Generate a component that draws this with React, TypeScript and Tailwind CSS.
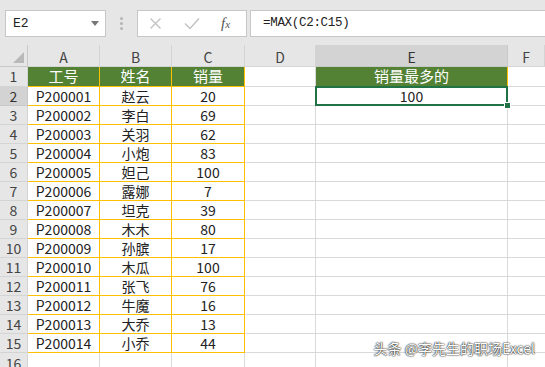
import React from "react";

const rows: [string, string, string][] = [
  ["P200001", "赵云", "20"],
  ["P200002", "李白", "69"],
  ["P200003", "关羽", "62"],
  ["P200004", "小炮", "83"],
  ["P200005", "妲己", "100"],
  ["P200006", "露娜", "7"],
  ["P200007", "坦克", "39"],
  ["P200008", "木木", "80"],
  ["P200009", "孙膑", "17"],
  ["P200010", "木瓜", "100"],
  ["P200011", "张飞", "76"],
  ["P200012", "牛魔", "16"],
  ["P200013", "大乔", "13"],
  ["P200014", "小乔", "44"],
];

const cols = ["A", "B", "C", "D", "E", "F"];

function FormulaBar() {
  return (
    <div className="flex h-[45px] items-start bg-[#e6e6e6] pt-[10px]">
      <div className="ml-[5px] flex h-[27px] w-[101px] items-center justify-between border border-[#c6c6c6] bg-white pl-[7px] pr-[6px]">
        <span className="font-['Liberation_Mono',monospace] text-[13px] text-[#222]">E2</span>
        <span className="h-0 w-0 border-x-[4px] border-t-[5px] border-x-transparent border-t-[#777]" />
      </div>
      <div className="flex h-[27px] w-[31px] flex-col items-center justify-center gap-[2px]">
        <span className="h-[3px] w-[3px] rounded-full bg-[#b5b5b5]" />
        <span className="h-[3px] w-[3px] rounded-full bg-[#b5b5b5]" />
        <span className="h-[3px] w-[3px] rounded-full bg-[#b5b5b5]" />
      </div>
      <div className="flex h-[27px] w-[110px] items-center border border-[#c6c6c6] bg-white">
        <svg width="36" height="27" viewBox="0 0 36 27">
          <path d="M12.5 8.5 L22.5 18.5 M22.5 8.5 L12.5 18.5" stroke="#c2c2c2" strokeWidth="1.4" fill="none" />
        </svg>
        <svg width="36" height="27" viewBox="0 0 36 27">
          <path d="M11 13.5 L16 18.5 L25 8.5" stroke="#c2c2c2" strokeWidth="1.4" fill="none" />
        </svg>
        <span className="ml-[11px] font-['Liberation_Serif',serif] text-[15px] italic text-[#555]">
          f<span className="text-[11px]">x</span>
        </span>
      </div>
      <div className="ml-[3px] flex h-[27px] flex-1 items-center border-y border-l border-[#c6c6c6] bg-white pl-[12px]">
        <span className="font-['Liberation_Mono',monospace] text-[12.5px] tracking-[-0.3px] text-[#222]">=MAX(C2:C15)</span>
      </div>
    </div>
  );
}

export default function App() {
  const txt = "font-['Noto_Sans_CJK_SC',sans-serif]";
  return (
    <div className="relative h-[367px] w-[545px] overflow-hidden bg-white">
      <FormulaBar />
      <div className={`grid grid-cols-[28px_72px_72px_73px_71px_192px_1fr] grid-rows-[22px_20px_repeat(15,19px)] ${txt}`}>
        {/* column header */}
        <div className="flex items-end justify-end border-r border-b border-[#c8c8c8] bg-[#e6e6e6] pr-[3px] pb-[3px]">
          <svg width="11" height="11" viewBox="0 0 11 11">
            <path d="M11 0 L11 11 L0 11 Z" fill="#b9b9b9" />
          </svg>
        </div>
        {cols.map((c) => (
          <div
            key={c}
            className={
              c === "E"
                ? "flex items-center justify-center border-r border-b border-[#c8c8c8] bg-[#d3d3d3] pt-[3px] text-[14px] text-[#333]"
                : "flex items-center justify-center border-r border-b border-[#d4d4d4] bg-[#e6e6e6] pt-[3px] text-[14px] text-[#444]"
            }
          >
            {c}
          </div>
        ))}

        {/* row 1 */}
        <div className="flex items-center justify-center border-r border-b border-[#d4d4d4] bg-[#e6e6e6] text-[14px] text-[#444]">1</div>
        {["工号", "姓名", "销量"].map((h) => (
          <div key={h} className="flex items-center justify-center border-r border-b border-[#ffc000] bg-[#548235] text-[15px] text-white">
            {h}
          </div>
        ))}
        <div className="border-r border-b border-[#d9d9d9]" />
        <div className="flex items-center justify-center border-r border-b border-[#ffc000] bg-[#548235] text-[15px] text-white">销量最多的</div>
        <div className="border-b border-[#d9d9d9]" />

        {rows.map((r, i) => (
          <React.Fragment key={r[0]}>
            <div
              className={
                i === 0
                  ? "flex items-center justify-center border-r border-b border-[#c8c8c8] bg-[#d3d3d3] text-[14px] text-[#333]"
                  : "flex items-center justify-center border-r border-b border-[#d4d4d4] bg-[#e6e6e6] text-[14px] text-[#444]"
              }
            >
              {i + 2}
            </div>
            {r.map((v, j) => (
              <div key={j} className="flex items-center justify-center border-r border-b border-[#ffc000] text-[14px] text-[#222]">
                {v}
              </div>
            ))}
            <div className="border-r border-b border-[#d9d9d9]" />
            {i === 0 ? (
              <div className="relative flex items-center justify-center border-r border-b border-[#d9d9d9] text-[14px] text-[#222]">
                100
                <span className="absolute -top-[1px] -left-[1px] -right-[1px] -bottom-[1px] border-2 border-[#217346]" />
                <span className="absolute -right-[4px] -bottom-[4px] h-[7px] w-[7px] border border-white bg-[#217346]" />
              </div>
            ) : (
              <div className="border-r border-b border-[#d9d9d9]" />
            )}
            <div className="border-b border-[#d9d9d9]" />
          </React.Fragment>
        ))}

        {/* row 16 */}
        <div className="flex items-start justify-center border-r border-[#d4d4d4] bg-[#e6e6e6] text-[14px] text-[#444]">16</div>
        <div className="border-r border-[#d9d9d9]" />
        <div className="border-r border-[#d9d9d9]" />
        <div className="border-r border-[#d9d9d9]" />
        <div className="border-r border-[#d9d9d9]" />
        <div className="border-r border-[#d9d9d9]" />
        <div />
      </div>
      <div className="absolute right-[10px] bottom-[8px] font-['Noto_Sans_CJK_SC',sans-serif] text-[14px] text-white [text-shadow:0_0_2px_#000,0_0_1px_#000]">
        头条 @李先生的职场Excel
      </div>
    </div>
  );
}
